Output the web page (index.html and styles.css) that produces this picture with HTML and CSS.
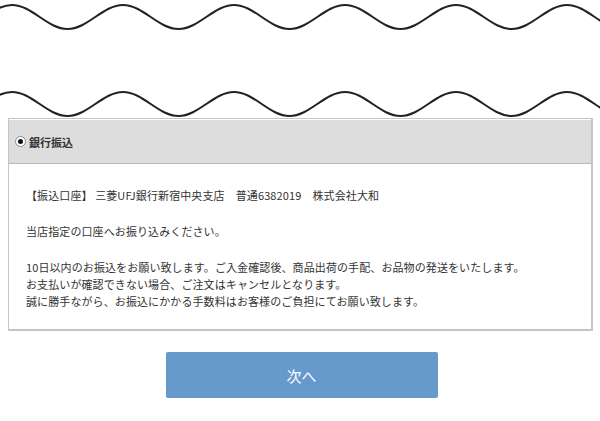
FILE: index.html
```html
<!DOCTYPE html>
<html lang="ja">
<head>
    <meta charset="UTF-8">
    <meta name="viewport" content="width=device-width, initial-scale=1.0">
    <title>お支払い方法</title>
    <link rel="stylesheet" href="styles.css">
</head>
<body>
    <div class="page">
        <!-- 区切りの波線 -->
        <svg class="waves" viewBox="0 0 600 118" width="600" height="118">
            <g fill="none" stroke="#222" stroke-width="2">
                <path id="wave" d="M-99 5 C-78.8 5 -63.7 29 -43.5 29 S-8.2 5 12 5 S47.3 29 67.5 29 S102.8 5 123 5 S158.3 29 178.5 29 S213.8 5 234 5 S269.3 29 289.5 29 S324.8 5 345 5 S380.3 29 400.5 29 S435.8 5 456 5 S491.3 29 511.5 29 S546.8 5 567 5 S602.3 29 622.5 29"/>
                <use href="#wave" transform="translate(0 87)"/>
            </g>
        </svg>

        <div class="payment">
            <div class="payment-head">
                <span class="radio"></span>
                <span class="label">銀行振込</span>
            </div>
            <div class="payment-body">
                <p>【振込口座】 三菱UFJ銀行新宿中央支店　普通6382019　株式会社大和</p>
                <p>当店指定の口座へお振り込みください。</p>
                <p>10日以内のお振込をお願い致します。ご入金確認後、商品出荷の手配、お品物の発送をいたします。<br>
                お支払いが確認できない場合、ご注文はキャンセルとなります。<br>
                誠に勝手ながら、お振込にかかる手数料はお客様のご負担にてお願い致します。</p>
            </div>
        </div>

        <div class="actions">
            <button class="btn-next">次へ</button>
        </div>
    </div>
</body>
</html>
```

FILE: styles.css
```css
html,body{
    margin: 0;
    padding: 0;
    background: #fff;
}
body{
    font-family: "Noto Sans CJK JP", "Noto Sans", sans-serif;
    color: #333;
}
.waves{
    display: block;
}
.payment{
    margin: 0 7px 0 8px;
    border: 1px solid #c4c4c4;
    border-bottom: 2px solid #c4c4c4;
    border-right: 2px solid #c4c4c4;
}
.payment-head{
    display: flex;
    align-items: center;
    height: 43px;
    margin-top: 1px;
    padding-left: 6px;
    background-color: #dddddd;
    border-bottom: 1px solid #b8b8b8;
}
.payment-head .radio{
    box-sizing: border-box;
    width: 11px;
    height: 11px;
    border: 1px solid #8a8a8a;
    border-radius: 50%;
    background: #fff;
    display: flex;
    align-items: center;
    justify-content: center;
}
.payment-head .radio::after{
    content: "";
    width: 5px;
    height: 5px;
    border-radius: 50%;
    background: #111;
}
.payment-head .label{
    margin-left: 3px;
    font-size: 11px;
    font-weight: bold;
    color: #333;
}
.payment-body{
    padding: 23px 17px 19px;
    font-size: 11px;
    line-height: 17px;
    letter-spacing: 0.1px;
}
.payment-body p{
    margin: 0 0 19px;
}
.payment-body p:last-child{
    margin-bottom: 0;
}
.actions{
    display: flex;
    justify-content: center;
    padding-top: 21px;
}
.btn-next{
    width: 272px;
    height: 46px;
    margin-left: 3px;
    border: none;
    border-radius: 2px;
    background-color: #6699cc;
    color: #fff;
    font-family: "Noto Sans CJK JP", sans-serif;
    font-size: 15px;
    cursor: pointer;
}
```
